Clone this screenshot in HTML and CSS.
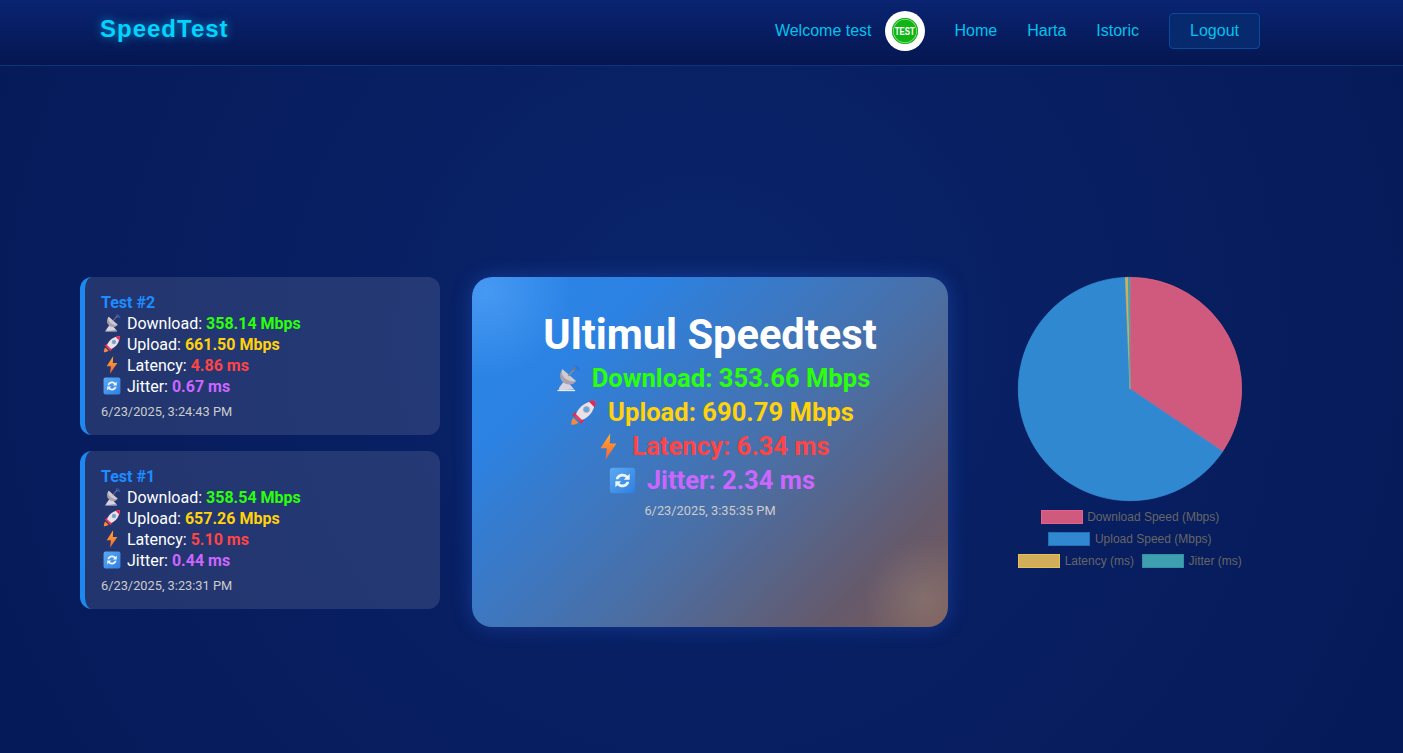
FILE: index.html
```html
<!DOCTYPE html>
<html lang="ro">
<head>
<meta charset="utf-8">
<title>SpeedTest</title>
<link rel="stylesheet" href="styles.css">
</head>
<body>
<svg class="defs" width="0" height="0" aria-hidden="true">
  <defs>
    <linearGradient id="bolt" x1="0.5" y1="0" x2="0.5" y2="1"><stop offset="0" stop-color="#ffb02e"/><stop offset="1" stop-color="#f4603a"/></linearGradient>
    <linearGradient id="btn" x1="0" y1="0" x2="1" y2="1"><stop offset="0" stop-color="#5aa9f5"/><stop offset="1" stop-color="#2f7fe0"/></linearGradient>
    <symbol id="i-dish" viewBox="0 0 32 32">
      <path d="M6 27 L12 19 L18 22 L24 29 L6 30 Z" fill="#d9d3e0"/>
      <path d="M4 29.5 H25 V31 H4 Z" fill="#ece8f0"/>
      <path d="M10 5 C5 11 7 19 13 22 C18 24.5 24 23 26 19 Z" fill="#a8a3ad"/>
      <path d="M10 5 C8 9 10 14 15 17 C20 20 24 20 26 19 Z" fill="#cfcad3"/>
      <path d="M17 13 L24 5" stroke="#8f8a95" stroke-width="1.6"/>
      <circle cx="24.5" cy="4.5" r="1.8" fill="#77727c"/>
      <path d="M24 1 C27 1 30 3.5 30 7" stroke="#2f6fe0" stroke-width="1.5" fill="none"/>
      <path d="M26 3.5 C27.5 4 28 5 28 6.5" stroke="#2f6fe0" stroke-width="1.3" fill="none"/>
    </symbol>
    <symbol id="i-rocket" viewBox="0 0 32 32">
      <path d="M4 22 C1.500 25 1.500 29 1.500 30.500 C3.500 30.500 7 30.500 10 28 Z" fill="#f08a3c"/>
      <path d="M7 15 L2.500 19.500 L9 21.500 Z" fill="#e8264f"/>
      <path d="M17 25 L12.500 29.500 L10.500 23 Z" fill="#e8264f"/>
      <path d="M7 18 C11 8 19 3 30 2 C29 13 24 21 14 25 Z" fill="#e9e1e8"/>
      <path d="M22 2.800 C25 2 28 2 30 2 C30 4 30 7 29.200 10 Z" fill="#e8264f"/>
      <path d="M7 18 L14 25 L11 26.500 L5.500 21 Z" fill="#ef3a62"/>
      <circle cx="19.500" cy="12.500" r="3.900" fill="#a7a0aa"/>
      <circle cx="19.500" cy="12.500" r="2.700" fill="#55a9f2"/>
    </symbol>
    <symbol id="i-bolt" viewBox="0 0 32 32">
      <path d="M18 0.500 L6.500 18 H14 L12.500 31.500 L25.500 12.500 H17.500 Z" fill="url(#bolt)"/>
    </symbol>
    <symbol id="i-sync" viewBox="0 0 32 32">
      <rect x="1" y="1" width="30" height="30" rx="3.500" fill="url(#btn)"/>
      <path d="M8 14.500 C8.500 10.500 12 8 16 8 C18.500 8 20.500 9 22 10.500 L24.500 8 V15 H17.500 L19.800 12.700 C18.800 11.700 17.500 11.200 16 11.200 C13.700 11.200 11.800 12.600 11.200 14.500 Z" fill="#eef5fd"/>
      <path d="M24 17.500 C23.500 21.500 20 24 16 24 C13.500 24 11.500 23 10 21.500 L7.500 24 V17 H14.500 L12.200 19.300 C13.200 20.300 14.500 20.800 16 20.800 C18.300 20.800 20.200 19.400 20.800 17.500 Z" fill="#eef5fd"/>
    </symbol>
  </defs>
</svg>

<header class="topbar">
  <a class="logo">SpeedTest</a>
  <nav class="nav">
    <span class="welcome">Welcome test</span>
    <span class="avatar"><span class="avatar-badge"><span class="avatar-text">TEST</span></span></span>
    <a class="nav-link">Home</a>
    <a class="nav-link">Harta</a>
    <a class="nav-link">Istoric</a>
    <a class="logout">Logout</a>
  </nav>
</header>

<main class="layout">
  <section class="history">
    <article class="test-card">
      <h3 class="test-title">Test #2</h3>
      <div class="row"><span class="ico"><svg><use href="#i-dish"/></svg></span> Download: <b class="c-down">358.14 Mbps</b></div>
      <div class="row"><span class="ico"><svg><use href="#i-rocket"/></svg></span> Upload: <b class="c-up">661.50 Mbps</b></div>
      <div class="row"><span class="ico"><svg><use href="#i-bolt"/></svg></span> Latency: <b class="c-lat">4.86 ms</b></div>
      <div class="row"><span class="ico"><svg><use href="#i-sync"/></svg></span> Jitter: <b class="c-jit">0.67 ms</b></div>
      <p class="stamp">6/23/2025, 3:24:43 PM</p>
    </article>
    <article class="test-card">
      <h3 class="test-title">Test #1</h3>
      <div class="row"><span class="ico"><svg><use href="#i-dish"/></svg></span> Download: <b class="c-down">358.54 Mbps</b></div>
      <div class="row"><span class="ico"><svg><use href="#i-rocket"/></svg></span> Upload: <b class="c-up">657.26 Mbps</b></div>
      <div class="row"><span class="ico"><svg><use href="#i-bolt"/></svg></span> Latency: <b class="c-lat">5.10 ms</b></div>
      <div class="row"><span class="ico"><svg><use href="#i-sync"/></svg></span> Jitter: <b class="c-jit">0.44 ms</b></div>
      <p class="stamp">6/23/2025, 3:23:31 PM</p>
    </article>
  </section>

  <section class="latest">
    <h1 class="latest-title">Ultimul Speedtest</h1>
    <div class="big-row c-down"><span class="big-ico"><svg><use href="#i-dish"/></svg></span> Download: 353.66 Mbps</div>
    <div class="big-row c-up"><span class="big-ico"><svg><use href="#i-rocket"/></svg></span> Upload: 690.79 Mbps</div>
    <div class="big-row c-lat"><span class="big-ico"><svg><use href="#i-bolt"/></svg></span> Latency: 6.34 ms</div>
    <div class="big-row c-jit"><span class="big-ico"><svg><use href="#i-sync"/></svg></span> Jitter: 2.34 ms</div>
    <p class="big-stamp">6/23/2025, 3:35:35 PM</p>
  </section>

  <section class="chart">
    <svg class="pie" viewBox="0 0 226 226" width="226" height="226">
      <path class="s-down" d="M113 113 L113 1.300 A111.700 111.700 0 0 1 205.600 175.500 Z"/>
      <path class="s-up" d="M113 113 L205.600 175.500 A111.700 111.700 0 1 1 108.400 1.400 Z"/>
      <path class="s-lat" d="M113 113 L108.400 1.400 L111.200 1.300 Z"/>
      <path class="s-jit" d="M113 113 L111.200 1.300 L113 1.300 Z"/>
    </svg>
    <div class="legend">
      <div class="legend-row"><span class="legend-item"><i class="box b-down"></i>Download Speed (Mbps)</span></div>
      <div class="legend-row"><span class="legend-item"><i class="box b-up"></i>Upload Speed (Mbps)</span></div>
      <div class="legend-row"><span class="legend-item"><i class="box b-lat"></i>Latency (ms)</span><span class="legend-item"><i class="box b-jit"></i>Jitter (ms)</span></div>
    </div>
  </section>
</main>
</body>
</html>
```
FILE: styles.css
```css
* { box-sizing: border-box; }
html, body { height: 100%; }
body {
  margin: 0;
  overflow: hidden;
  font-family: Roboto, "Liberation Sans", sans-serif;
  color: #fff;
  background: radial-gradient(circle at 50% 45%, #0a256c 0%, #081f62 45%, #051a58 100%);
}
.defs { display: block; height: 0; }

.topbar {
  height: 66px;
  display: flex;
  align-items: center;
  justify-content: space-between;
  padding: 0 143px 3px 100px;
  background: linear-gradient(180deg, #0a2472 0%, #051650 100%);
  border-bottom: 1px solid #0c3478;
  font-family: "Liberation Sans", Arial, sans-serif;
}
.logo {
  font-size: 24px;
  font-weight: 700;
  letter-spacing: 1px;
  color: #00d4ff;
  text-shadow: 0 0 10px rgba(0, 212, 255, .6);
  margin-bottom: 4px;
}
.nav { display: flex; align-items: center; font-size: 16px; color: #00c3ec; }
.welcome { margin-right: 13px; margin-bottom: 1px; }
.avatar {
  width: 40px;
  height: 40px;
  border-radius: 50%;
  background: #fff;
  display: flex;
  align-items: center;
  justify-content: center;
  margin-right: 30px;
}
.avatar-badge {
  width: 26px;
  height: 26px;
  border-radius: 50%;
  background: #10b414;
  box-shadow: inset 0 0 0 1px #10b414, inset 0 0 0 1.700px #9be39c;
  display: flex;
  align-items: center;
  justify-content: center;
}
.avatar-text {
  font-size: 10px;
  font-weight: 700;
  color: #fff;
  letter-spacing: 0;
  font-family: "Liberation Sans", sans-serif;
  transform: scaleX(.78);
}
.nav-link { margin-right: 30px; margin-bottom: 1px; }
.logout {
  width: 91px;
  height: 36px;
  display: flex;
  align-items: center;
  justify-content: center;
  border: 1px solid #0a4a9c;
  border-radius: 4px;
  background: #07296e;
}

.layout {
  display: flex;
  align-items: flex-start;
  gap: 32px;
  padding: 211px 0 0 80px;
}
.history { width: 360px; display: flex; flex-direction: column; gap: 16px; }
.test-card {
  height: 158px;
  padding: 15px 16px 0;
  border-left: 5px solid #1e88f0;
  border-radius: 12px;
  background: rgba(255, 255, 255, .115);
  font-size: 16px;
  line-height: 21px;
  font-weight: 400;
}
.test-title { margin: 0; font-size: 16px; line-height: 21px; font-weight: 700; color: #1e8cff; }
.row { white-space: nowrap; }
.row b { font-weight: 700; }
.ico { display: inline-block; width: 22px; height: 18px; vertical-align: -3px; text-align: center; }
.ico svg { width: 18px; height: 18px; display: inline-block; }
.stamp { margin: 6px 0 0; font-size: 12.8px; line-height: 18px; font-weight: 400; color: #ccc; }
.c-down { color: #2bff0a; }
.c-up { color: #ffd20a; }
.c-lat { color: #ff4444; }
.c-jit { color: #cc66ff; }

.latest {
  width: 476px;
  height: 350px;
  padding-top: 33px;
  border-radius: 20px;
  text-align: center;
  background:
    radial-gradient(circle at 3% 4%, rgba(110, 180, 255, .42) 0, rgba(110, 180, 255, 0) 15%),
    radial-gradient(circle at 95% 92%, rgba(170, 150, 130, .32) 0, rgba(170, 150, 130, 0) 11%),
    linear-gradient(135deg, #2a86ea 0%, #2c82e2 22%, #4a6fa6 58%, #65596a 85%, #7a5c5c 100%);
  box-shadow: 0 0 20px rgba(50, 120, 255, .3);
}
.latest-title { margin: 0 0 2px; font-size: 41.6px; line-height: 49px; font-weight: 700; color: #fff; }
.big-row { font-size: 25.6px; line-height: 34px; font-weight: 700; white-space: nowrap; }
.big-ico { display: inline-block; width: 35.6px; height: 27px; vertical-align: -5px; text-align: center; }
.big-ico svg { width: 27px; height: 27px; display: inline-block; }
.big-stamp { margin: 5px 0 0; font-size: 12.8px; line-height: 18px; color: #ccc; }

.chart { width: 300px; display: flex; flex-direction: column; align-items: center; }
.pie { display: block; margin-top: -1px; }
.s-down { fill: #cf5a7e; stroke: #e8607f; stroke-width: .7; }
.s-up { fill: #2f88d0; stroke: #3395e0; stroke-width: .7; }
.s-lat { fill: #d0ae5c; stroke: #e8c050; stroke-width: .5; }
.s-jit { fill: #3e9fae; stroke: #45b0b5; stroke-width: .5; }
.legend { margin-top: 4px; font-family: "Liberation Sans", Arial, sans-serif; font-size: 12px; color: #666; }
.legend-row { display: flex; justify-content: center; gap: 8px; height: 22px; align-items: center; }
.legend-item { display: flex; align-items: center; white-space: nowrap; }
.box { display: block; width: 42px; height: 14px; margin-right: 4.5px; border: 1px solid; }
.b-down { background: #cf5a7e; border-color: #e8608a; }
.b-up { background: #2f88d0; border-color: #1f70b8; }
.b-lat { background: #d0ae5c; border-color: #e8c050; }
.b-jit { background: #3e9fae; border-color: #2f90a8; }
```
